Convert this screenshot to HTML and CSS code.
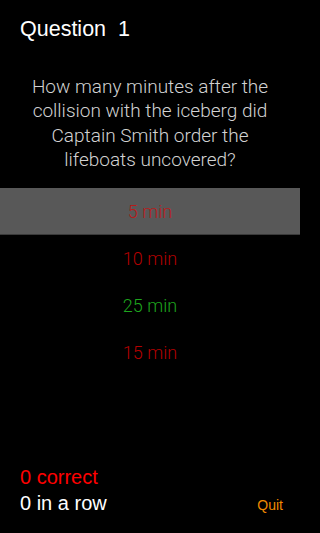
FILE: index.html
```html
<!DOCTYPE html>
<html>
<head>
<meta charset="utf-8">
<link rel="stylesheet" href="styles.css">
</head>
<body>
<div class="screen">
  <h1 class="title">Question&nbsp;&nbsp;1</h1>
  <p class="question">How many minutes after the collision with the iceberg did Captain Smith order the lifeboats uncovered?</p>
  <ul class="answers">
    <li class="answer selected wrong">5 min</li>
    <li class="answer wrong">10 min</li>
    <li class="answer right">25 min</li>
    <li class="answer wrong">15 min</li>
  </ul>
  <div class="footer">
    <div class="stats">
      <div class="correct">0 correct</div>
      <div class="streak">0 in a row</div>
    </div>
    <div class="quit">Quit</div>
  </div>
</div>
</body>
</html>
```
FILE: styles.css
```css
html, body {
  margin: 0;
  padding: 0;
  background: #000;
}
.screen {
  width: 300px;
  height: 533px;
  display: flex;
  flex-direction: column;
  font-family: "Liberation Sans", Arial, sans-serif;
  color: #fff;
}
.title {
  margin: 0;
  padding: 17px 0 0 20px;
  font-size: 21.5px;
  font-weight: 400;
  line-height: 24px;
}
.question {
  margin: 34px 20px 0;
  font-family: Roboto, "Liberation Sans", sans-serif;
  font-weight: 300;
  font-size: 19px;
  line-height: 24.3px;
  text-align: center;
  color: #d2d2d2;
}
.answers {
  list-style: none;
  margin: 16px 0 0;
  padding: 0;
  display: flex;
  flex-direction: column;
}
.answer {
  height: 47px;
  display: flex;
  align-items: center;
  justify-content: center;
  font-family: Roboto, "Liberation Sans", sans-serif;
  font-weight: 300;
  font-size: 18px;
}
.selected {
  background: #585858;
  border-bottom: 1px solid #3a3a3a;
  box-sizing: border-box;
}
.wrong { color: #b30000; }
.selected.wrong { color: #b81a1a; }
.right { color: #1ea51e; }
.footer {
  margin-top: auto;
  padding: 0 17px 17px 20px;
  display: flex;
  justify-content: space-between;
  align-items: flex-end;
}
.stats {
  font-size: 20px;
  line-height: 26px;
}
.correct { color: #ff0000; }
.streak { color: #fff; }
.quit {
  color: #f08a00;
  font-size: 14px;
  line-height: 18px;
  padding-bottom: 2px;
}
```
